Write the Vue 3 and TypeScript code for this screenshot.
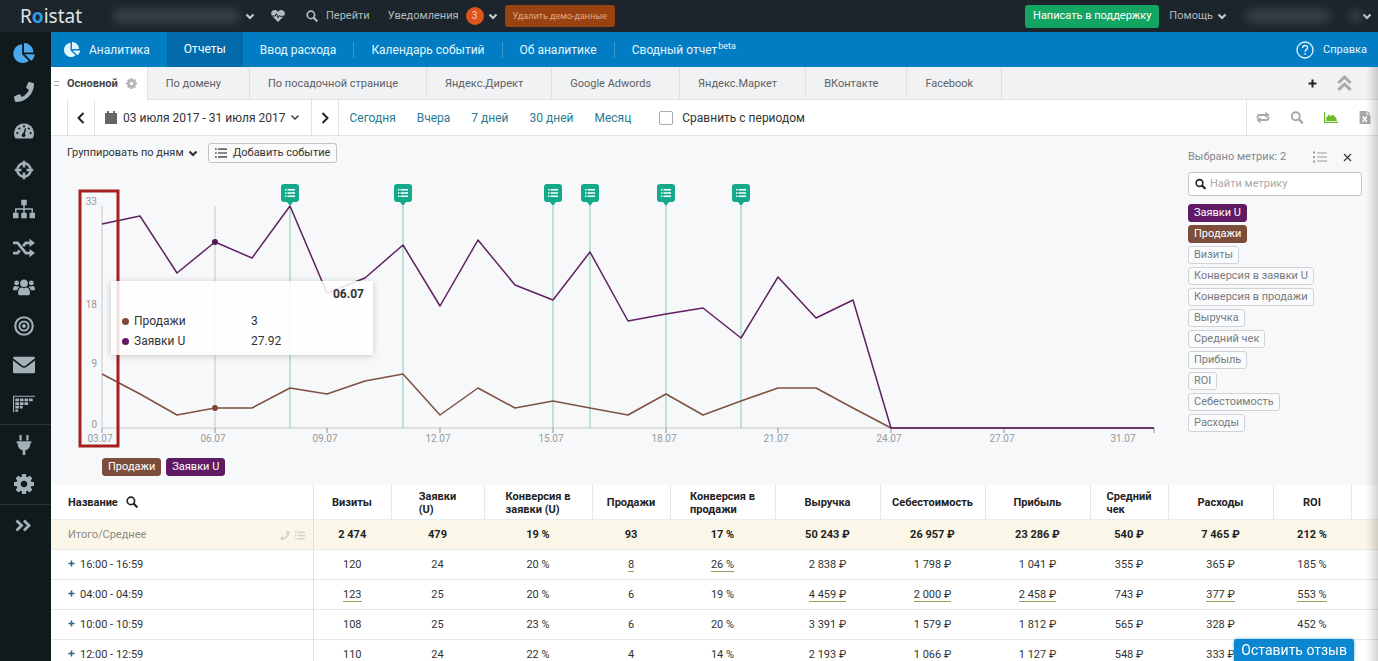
<script setup lang="ts">
import { computed, onBeforeUnmount, onMounted, ref } from 'vue'

const sideMain = ['pie', 'phone', 'gauge', 'cross', 'sitemap', 'shuffle', 'users', 'target', 'mail', 'cohort']
const sideTools = ['plug', 'gear']
const labels: Record<string, string> = {
  pie: 'Аналитика', phone: 'Звонки', gauge: 'Показатели', cross: 'Цели', sitemap: 'Каналы', shuffle: 'Сценарии',
  users: 'Клиенты', target: 'Ретаргетинг', mail: 'Рассылки', cohort: 'Когорты', plug: 'Интеграции', gear: 'Настройки',
}

const navItems = [
  { title: 'Ввод расхода' },
  { title: 'Календарь событий' },
  { title: 'Об аналитике' },
  { title: 'Сводный отчет', note: 'beta' },
]
const tabs = ['По домену', 'По посадочной странице', 'Яндекс.Директ', 'Google Adwords', 'Яндекс.Маркет', 'ВКонтакте', 'Facebook']
const ranges = ['Сегодня', 'Вчера', '7 дней', '30 дней', 'Месяц']
const metrics = ['Визиты', 'Конверсия в заявки U', 'Конверсия в продажи', 'Выручка', 'Средний чек', 'Прибыль', 'ROI', 'Себестоимость', 'Расходы']

const compare = ref(false)
const query = ref('')
const grouping = ref('day')

/* Chart */
const leads = [30.3, 31.5, 23, 27.6, 25.3, 33, 20, 22.3, 27.2, 18.1, 27.9, 21.3, 19.1, 26.1, 15.9, 17, 17.9, 13.4, 22.4, 16.3, 19, 0, 0, 0, 0, 0, 0, 0, 0]
const sales = [8, 5, 2, 3, 3, 6, 5, 7, 8, 2, 6, 3, 4, 3, 2, 5, 2, 4, 6, 6, 3, 0, 0, 0, 0, 0, 0, 0, 0]
const events = [5, 8, 12, 13, 15, 17]
const ticks = [0, 3, 6, 9, 12, 15, 18, 21, 24]
const yLabels = [
  { text: '33', y: 31 },
  { text: '18', y: 134 },
  { text: '9', y: 193 },
  { text: '0', y: 254 },
]
const baseY = 254
const topY = 32
const leftX = 51
const rightPad = 34
const plot = ref<HTMLElement | null>(null)
const width = ref(1136)
const step = computed(() => (width.value - leftX - rightPad) / 28)
const endX = computed(() => x(28))
function x(day: number): number {
  return Math.round(leftX + day * step.value)
}
function y(value: number): number {
  return Math.round(baseY - (value * (baseY - topY)) / 33)
}
function line(values: number[]): string {
  return values.map((v, i) => `${x(i)},${y(v)}`).join(' ')
}
function day(n: number): string {
  return String(n + 3).padStart(2, '0') + '.07'
}
let observer: ResizeObserver | undefined
onMounted(() => {
  const el = plot.value
  if (!el) return
  width.value = el.clientWidth
  observer = new ResizeObserver(() => (width.value = el.clientWidth))
  observer.observe(el)
})
onBeforeUnmount(() => observer?.disconnect())

/* Table */
const columns = [
  { title: ['Визиты'], w: 'w-s' },
  { title: ['Заявки', '(U)'], w: 'w-m' },
  { title: ['Конверсия в', 'заявки (U)'], w: 'w-xl' },
  { title: ['Продажи'], w: 'w-s' },
  { title: ['Конверсия в', 'продажи'], w: 'w-l' },
  { title: ['Выручка'], w: 'w-l' },
  { title: ['Себестоимость'], w: 'w-l' },
  { title: ['Прибыль'], w: 'w-l' },
  { title: ['Средний', 'чек'], w: 'w-s' },
  { title: ['Расходы'], w: 'w-l' },
  { title: ['ROI'], w: 'w-s' },
]
const total = ['2 474', '479', '19 %', '93', '17 %', '50 243 ₽', '26 957 ₽', '23 286 ₽', '540 ₽', '7 465 ₽', '212 %']
const rows = [
  { name: '16:00 - 16:59', best: [3, 4], cells: ['120', '24', '20 %', '8', '26 %', '2 838 ₽', '1 798 ₽', '1 041 ₽', '355 ₽', '365 ₽', '185 %'] },
  { name: '04:00 - 04:59', best: [0, 5, 6, 7, 9, 10], cells: ['123', '25', '20 %', '6', '19 %', '4 459 ₽', '2 000 ₽', '2 458 ₽', '743 ₽', '377 ₽', '553 %'] },
  { name: '10:00 - 10:59', best: [], cells: ['108', '25', '23 %', '6', '20 %', '3 391 ₽', '1 579 ₽', '1 812 ₽', '565 ₽', '328 ₽', '452 %'] },
  { name: '12:00 - 12:59', best: [], cells: ['110', '24', '22 %', '4', '14 %', '2 193 ₽', '1 066 ₽', '1 127 ₽', '548 ₽', '333 ₽', ''] },
] as { name: string; best: number[]; cells: string[] }[]
</script>

<template>
  <div class="app">
    <svg class="sprite" aria-hidden="true">
      <symbol id="pie" viewBox="0 0 544 512"><path fill="currentColor" d="M527.79 288H290.5l158.03 158.03c6.04 6.04 15.98 6.53 22.19.68 38.7-36.46 65.32-85.61 73.13-140.86 1.34-9.46-6.51-17.85-16.06-17.85zm-15.83-64.8C503.72 103.74 408.26 8.28 288.8.04 279.68-.59 272 7.1 272 16.24V240h223.77c9.14 0 16.82-7.68 16.19-16.8zM224 288V50.71c0-9.55-8.39-17.4-17.84-16.06C86.99 51.49-4.1 155.6.14 280.37 4.5 408.51 114.83 513.59 243.03 511.98c50.4-.63 96.97-16.87 135.26-44.03 7.9-5.6 8.42-17.23 1.57-24.08L224 288z" /></symbol>
      <symbol id="phone" viewBox="0 0 512 512"><path fill="currentColor" d="M493.4 24.6l-104-24c-11.3-2.6-22.9 3.3-27.5 13.9l-48 112c-4.2 9.8-1.4 21.3 6.9 28l60.6 49.6c-36 76.7-98.9 140.5-177.2 177.2l-49.6-60.6c-6.8-8.3-18.2-11.1-28-6.9l-112 48C3.9 366.5-2 378.1.6 389.4l24 104C27.1 504.2 36.7 512 48 512c256.1 0 464-207.5 464-464 0-11.2-7.7-20.9-18.6-23.4z" /></symbol>
      <symbol id="gauge" viewBox="0 0 24 24"><path fill="currentColor" d="M12 3a12 12 0 0 0-10.300 18h20.600A12 12 0 0 0 12 3z" /><g class="cut"><circle cx="12" cy="6.500" r="1.300" /><circle cx="6.500" cy="9" r="1.300" /><circle cx="4" cy="14.500" r="1.300" /><circle cx="20" cy="14.500" r="1.300" /><circle cx="17.800" cy="9" r="1.300" /><circle cx="11.500" cy="17" r="2.200" /><path d="M10.700 16l2.600-7.500 1.300.500-1.800 7.500z" /></g></symbol>
      <symbol id="cross" viewBox="0 0 24 24"><g fill="none" stroke="currentColor" stroke-width="3"><circle cx="12" cy="12" r="8" /><path d="M12 1v8M12 15v8M1 12h8M15 12h8" /></g></symbol>
      <symbol id="sitemap" viewBox="0 0 24 20"><path fill="currentColor" d="M9 0h6v6H9zM0 14h6v6H0zM9 14h6v6H9zM18 14h6v6h-6z" /><path fill="none" stroke="currentColor" stroke-width="1.600" d="M12 5v9M3 14v-4h18v4" /></symbol>
      <symbol id="shuffle" viewBox="0 0 24 20"><path fill="none" stroke="currentColor" stroke-width="3" d="M0 4.500h5l9 11h5M0 15.500h5l2.300-2.800M11 8l3-3.500h5" /><path fill="currentColor" d="M18 0l6 4.500L18 9zM18 11l6 4.500-6 4.500z" /></symbol>
      <symbol id="users" viewBox="0 0 24 18"><g fill="currentColor"><circle cx="12" cy="5" r="4.200" /><circle cx="4" cy="4.500" r="2.600" /><circle cx="20" cy="4.500" r="2.600" /><path d="M5.500 15.500c0-4 2-6 4-6 1.500 1 3.500 1 5 0 2 0 4 2 4 6 0 1.500-.8 2.500-2 2.500h-9c-1.200 0-2-1-2-2.500zM0 11.500C0 9 1 8 2.500 8c1 .6 2 .6 3.300.1L7 9.300C5.500 10 5 11 4.600 12.500H1c-.6 0-1-.4-1-1zM24 11.500C24 9 23 8 21.500 8c-1 .6-2 .6-3.300.1L17 9.300c1.500.700 2 1.700 2.400 3.200H23c.6 0 1-.4 1-1z" /></g></symbol>
      <symbol id="target" viewBox="0 0 24 24"><g fill="none" stroke="currentColor"><circle cx="12" cy="12" r="10.500" stroke-width="2.600" /><circle cx="12" cy="12" r="5.500" stroke-width="2.400" /></g><circle cx="12" cy="12" r="2.300" fill="currentColor" /></symbol>
      <symbol id="mail" viewBox="0 0 24 18"><path fill="currentColor" d="M1.500 0h21Q24 0 24 1.500L14 9.500q-2 1.500-4 0L0 1.500Q0 0 1.500 0zM0 4l9 7q3 2 6 0l9-7v12.500q0 1.500-1.500 1.500h-21Q0 18 0 16.500z" /></symbol>
      <symbol id="cohort" viewBox="0 0 24 18"><path fill="currentColor" d="M0 0h24v1.200H1.200V18H0zM2.500 3h4v3h-4zM7.500 3h4v3h-4zM12.500 3h4v3h-4zM17.500 3h4v3h-4zM2.500 7h4v3h-4zM7.500 7h4v3h-4zM12.500 7h4v3h-4zM2.500 11h4v3h-4zM7.500 11h3v3h-3zM2.500 15h3v2.500h-3z" /></symbol>
      <symbol id="plug" viewBox="0 0 18 22"><path fill="currentColor" d="M4 0h2.400v6H4zM11.600 0H14v6h-2.400zM1 7h16v2h-1c0 4.500-2 7-5.500 7.800V22h-3v-5.200C4 16 2 13.500 2 9H1z" /></symbol>
      <symbol id="gear" viewBox="0 128 1536 1536"><path fill="currentColor" d="M1024 896q0-106-75-181t-181-75-181 75-75 181 75 181 181 75 181-75 75-181zm512-109v222q0 12-8 23t-20 13l-185 28q-19 54-39 91 35 50 107 138 10 12 10 25t-9 23q-27 37-99 108t-94 71q-12 0-26-9l-138-108q-44 23-91 38-16 136-29 186-7 28-36 28h-222q-14 0-24.500-8.500t-11.500-21.500l-28-184q-49-16-90-37l-141 107q-10 9-25 9-14 0-25-11-126-114-165-168-7-10-7-23 0-12 8-23 15-21 51-66.500t54-70.500q-27-50-41-99l-183-27q-13-2-21-12.500t-8-23.500v-222q0-12 8-23t19-13l186-28q14-46 39-92-40-57-107-138-10-12-10-24 0-10 9-23 26-36 98.500-107.500t94.500-71.500q13 0 26 10l138 107q44-23 91-38 16-136 29-186 7-28 36-28h222q14 0 24.500 8.500t11.500 21.500l28 184q49 16 90 37l142-107q9-9 24-9 13 0 25 10 129 119 165 170 7 8 7 22 0 12-8 23-15 21-51 66.500t-54 70.500q26 50 41 98l183 28q13 2 21 12.500t8 23.500z" /></symbol>
      <symbol id="dbl" viewBox="0 0 18 14"><path fill="none" stroke="currentColor" stroke-width="3" d="M2 1.500L7.500 7 2 12.500M10 1.500L15.500 7 10 12.500" /></symbol>
      <symbol id="down" viewBox="0 0 10 7"><path fill="none" stroke="currentColor" stroke-width="2.200" d="M1.500 1.500L5 5l3.500-3.500" /></symbol>
      <symbol id="thin" viewBox="0 0 10 7"><path fill="none" stroke="currentColor" stroke-width="1.400" d="M1.500 1.500L5 5l3.500-3.500" /></symbol>
      <symbol id="prev" viewBox="0 0 8 12"><path fill="none" stroke="currentColor" stroke-width="2" d="M6.500 1L1.500 6l5 5" /></symbol>
      <symbol id="next" viewBox="0 0 8 12"><path fill="none" stroke="currentColor" stroke-width="2" d="M1.500 1l5 5-5 5" /></symbol>
      <symbol id="search" viewBox="0 0 14 14"><circle cx="5.700" cy="5.700" r="4.300" fill="none" stroke="currentColor" stroke-width="2" /><path stroke="currentColor" stroke-width="2.600" stroke-linecap="round" d="M9.300 9.300l3.200 3.200" /></symbol>
      <symbol id="heart" viewBox="0 0 14 12"><path fill="currentColor" d="M7 12L1.200 6.200C-.5 4 0 1.800 1.500.7 3.300-.5 5.700 0 7 2c1.300-2 3.700-2.500 5.500-1.300C14 1.800 14.500 4 12.800 6.200z" /><path class="beat" d="M1 6h3.200L5.500 3.500l1.700 4.300L8.500 5.500l.6.800H13" /></symbol>
      <symbol id="list" viewBox="0 0 14 11"><path fill="currentColor" d="M0 0h2v2H0zM3.500 0H14v2H3.500zM0 4.500h2v2H0zM3.500 4.500H14v2H3.500zM0 9h2v2H0zM3.500 9H14v2H3.500z" /></symbol>
      <symbol id="thinlist" viewBox="0 0 14 11"><path fill="currentColor" d="M0 0h2v2H0zM4 1h10v1H4zM0 4.500h2v2H0zM4 5h10v1H4zM0 9h2v2H0zM4 9h10v1H4z" /></symbol>
      <symbol id="calendar" viewBox="0 0 12 13"><path fill="currentColor" d="M0 2h2V0h2v2h4V0h2v2h2v11H0z" /></symbol>
      <symbol id="repeat" viewBox="0 0 14 12"><path fill="none" stroke="currentColor" stroke-width="1.800" d="M1.500 7V5.500Q1.500 3.500 3.500 3.500H10M12.500 5v1.500q0 2-2 2H4" /><path fill="currentColor" d="M9.500 0L13.500 3.500l-4 3.200zM4.500 5.300L.5 8.500l4 3.500z" /></symbol>
      <symbol id="chart" viewBox="0 0 14 11"><path fill="currentColor" d="M0 0h1.200v9.800H14V11H0zM2.200 9V6L5 2.500l2 1.800L9 2.500 11 5l1 .5L13 9z" /></symbol>
      <symbol id="file" viewBox="0 0 10 12"><path fill="currentColor" d="M0 0h6.500v3.500H10V12H0zM7.300 0L10 2.700H7.300z" /><path class="cutline" d="M2.800 5l4 5M6.800 5l-4 5" /></symbol>
      <symbol id="plus" viewBox="0 0 9 9"><path stroke="currentColor" stroke-width="2" d="M4.500 .5v8M.5 4.500h8" /></symbol>
      <symbol id="close" viewBox="0 0 9 9"><path stroke="currentColor" stroke-width="1.200" d="M1 1l7 7M8 1L1 8" /></symbol>
      <symbol id="up2" viewBox="0 0 14 15"><path fill="none" stroke="currentColor" stroke-width="2.800" d="M1.200 7.500L7 2l5.800 5.500M1.200 14L7 8.500l5.800 5.500" /></symbol>
      <symbol id="help" viewBox="0 0 18 18"><circle cx="9" cy="9" r="8" fill="none" stroke="currentColor" stroke-width="1.300" /><path fill="none" stroke="currentColor" stroke-width="1.400" d="M6.600 7c0-3.300 5-3.200 5-.3 0 1.900-2.500 1.900-2.500 4M9.100 12v1.700" /></symbol>
    </svg>

    <header class="top">
      <a class="logo" href="#">R<span>o</span>istat</a>
      <button class="account" aria-label="Выбор проекта"><i class="mask mask-l"></i><svg class="i10"><use href="#down" /></svg></button>
      <button class="heart" aria-label="Состояние"><svg class="i14"><use href="#heart" /></svg></button>
      <button class="go"><svg class="i14"><use href="#search" /></svg>Перейти</button>
      <button class="notice">Уведомления <b>3</b><svg class="i10"><use href="#down" /></svg></button>
      <button class="demo">Удалить демо-данные</button>
      <span class="grow"></span>
      <button class="support">Написать в поддержку</button>
      <button class="help">Помощь<svg class="i10"><use href="#down" /></svg></button>
      <button class="user" aria-label="Профиль"><i class="mask mask-m"></i><i class="mask mask-s"></i><svg class="i10"><use href="#down" /></svg></button>
    </header>

    <div class="body">
      <aside class="side">
        <nav class="group">
          <a v-for="(s, i) in sideMain" :key="s" href="#" :class="{ on: i === 0 }" :aria-label="labels[s]"><svg><use :href="'#' + s" /></svg></a>
        </nav>
        <nav class="group">
          <a v-for="s in sideTools" :key="s" href="#" :aria-label="labels[s]"><svg><use :href="'#' + s" /></svg></a>
        </nav>
        <nav class="group">
          <a href="#" class="small" aria-label="Развернуть меню"><svg><use href="#dbl" /></svg></a>
        </nav>
      </aside>

      <main class="main">
        <nav class="nav">
          <a href="#" class="section"><svg><use href="#pie" /></svg>Аналитика</a>
          <a href="#" class="current">Отчеты</a>
          <a v-for="n in navItems" :key="n.title" href="#" class="item">{{ n.title }}<sup v-if="n.note">{{ n.note }}</sup></a>
          <span class="grow"></span>
          <a href="#" class="ref"><svg><use href="#help" /></svg>Справка</a>
        </nav>

        <div class="tabs">
          <a href="#" class="tab chosen"><i class="grip"></i>Основной<svg><use href="#gear" /></svg></a>
          <a v-for="t in tabs" :key="t" href="#" class="tab">{{ t }}</a>
          <span class="grow"></span>
          <button class="add" aria-label="Добавить отчет"><svg><use href="#plus" /></svg></button>
          <button class="fold" aria-label="Свернуть"><svg><use href="#up2" /></svg></button>
        </div>

        <div class="tools">
          <button class="arrow" aria-label="Предыдущий период"><svg><use href="#prev" /></svg></button>
          <button class="period"><svg class="cal"><use href="#calendar" /></svg>03 июля 2017 - 31 июля 2017<svg class="i10"><use href="#thin" /></svg></button>
          <button class="arrow" aria-label="Следующий период"><svg><use href="#next" /></svg></button>
          <div class="ranges"><a v-for="r in ranges" :key="r" href="#">{{ r }}</a></div>
          <label class="compare"><input v-model="compare" type="checkbox" />Сравнить с периодом</label>
          <span class="grow"></span>
          <div class="actions">
            <button aria-label="Обновить"><svg><use href="#repeat" /></svg></button>
            <button aria-label="Поиск"><svg><use href="#search" /></svg></button>
            <button class="green" aria-label="График"><svg><use href="#chart" /></svg></button>
            <button aria-label="Экспорт в Excel"><svg><use href="#file" /></svg></button>
          </div>
        </div>

        <section class="report">
          <div class="graph">
            <div class="graph-bar">
              <span class="grouping">
                <select v-model="grouping" aria-label="Группировка">
                  <option value="day">Группировать по дням</option>
                </select>
                <svg class="i10"><use href="#down" /></svg>
              </span>
              <button class="event"><svg><use href="#list" /></svg>Добавить событие</button>
            </div>

            <div ref="plot" class="plot">
              <svg class="canvas" :width="width" height="284" role="img" aria-label="Продажи и заявки по дням">
                <g class="grid">
                  <line :x1="leftX" :x2="endX" :y1="baseY" :y2="baseY" />
                  <line v-for="t in [0, 3]" :key="t" :x1="x(t)" :x2="x(t)" :y1="topY" :y2="baseY" />
                </g>
                <g class="ticks">
                  <line v-for="t in [...ticks, 28]" :key="t" :x1="x(t)" :x2="x(t)" :y1="baseY" :y2="baseY + 5" />
                </g>
                <line v-for="e in events" :key="e" class="mark" :x1="x(e)" :x2="x(e)" :y1="topY" :y2="baseY" />
                <polyline class="sales" :points="line(sales)" />
                <polyline class="leads" :points="line(leads)" />
                <circle class="dot-l" :cx="x(3)" :cy="y(leads[3])" r="3" />
                <circle class="dot-s" :cx="x(3)" :cy="y(sales[3])" r="3" />
                <g v-for="e in events" :key="'m' + e" class="flag">
                  <path :d="`M${x(e) - 6} 10h12q3 0 3 3v12q0 3-3 3h-3l-3 4-3-4h-3q-3 0-3-3v-12q0-3 3-3z`" />
                  <use href="#list" :x="x(e) - 5" y="15" width="10" height="8" />
                </g>
                <text v-for="l in yLabels" :key="l.text" class="axis end" x="46" :y="l.y">{{ l.text }}</text>
                <text v-for="t in ticks" :key="'t' + t" class="axis mid" :x="x(t) - 2" :y="baseY + 14">{{ day(t) }}</text>
                <text class="axis mid" :x="endX - 31" :y="baseY + 14">31.07</text>
                <rect class="frame" x="29" y="17" width="38" height="255" />
              </svg>
              <div class="tip">
                <strong>06.07</strong>
                <dl>
                  <dt class="s">Продажи</dt><dd>3</dd>
                  <dt class="l">Заявки U</dt><dd>27.92</dd>
                </dl>
              </div>
            </div>
            <div class="legend">
              <button class="tag brown">Продажи</button>
              <button class="tag purple">Заявки U</button>
            </div>
          </div>

          <aside class="metrics">
            <div class="metrics-head">
              <span>Выбрано метрик: 2</span>
              <button aria-label="Список"><svg class="i14"><use href="#thinlist" /></svg></button>
              <button class="dark" aria-label="Закрыть"><svg class="x"><use href="#close" /></svg></button>
            </div>
            <label class="find"><svg><use href="#search" /></svg><input v-model="query" type="text" placeholder="Найти метрику" aria-label="Найти метрику" /></label>
            <button class="tag purple">Заявки U</button>
            <button class="tag brown">Продажи</button>
            <button v-for="m in metrics" :key="m" class="tag">{{ m }}</button>
          </aside>
        </section>

        <table class="data">
          <colgroup>
            <col />
            <col v-for="(c, i) in columns" :key="i" :class="c.w" />
            <col class="w-rest" />
          </colgroup>
          <thead>
            <tr>
              <th class="name" scope="col">Название<svg><use href="#search" /></svg></th>
              <th v-for="(c, i) in columns" :key="i" scope="col"><span><template v-for="(p, j) in c.title" :key="p"><br v-if="j" />{{ p }}</template></span></th>
              <th></th>
            </tr>
          </thead>
          <tbody>
            <tr class="total">
              <td class="name"><div><span>Итого/Среднее</span><svg class="call"><use href="#phone" /></svg><svg class="lst"><use href="#list" /></svg></div></td>
              <td v-for="(v, i) in total" :key="i">{{ v }}</td>
              <td></td>
            </tr>
            <tr v-for="r in rows" :key="r.name">
              <td class="name"><button aria-label="Развернуть"><svg><use href="#plus" /></svg></button>{{ r.name }}</td>
              <td v-for="(v, i) in r.cells" :key="i"><span :class="{ best: r.best.includes(i) }">{{ v }}</span></td>
              <td></td>
            </tr>
          </tbody>
        </table>
        <i class="edge"></i>
      </main>
    </div>
    <button class="feedback">Оставить отзыв</button>
  </div>
</template>

<style>
body { margin: 0; }
</style>

<style scoped>
.app { height: 100vh; display: flex; flex-direction: column; overflow: hidden; font: 12px/16px Roboto, "Noto Sans", sans-serif; color: #333; background: #fff; }
.app * { box-sizing: border-box; }
.sprite { position: absolute; width: 0; height: 0; }
button { font: inherit; color: inherit; background: none; border: 0; padding: 0; margin: 0; display: inline-flex; align-items: center; cursor: pointer; white-space: nowrap; }
a { color: inherit; text-decoration: none; white-space: nowrap; }
svg { display: block; flex: none; }
.grow { flex: 1; }
.i10 { width: 10px; height: 7px; }
.i14 { width: 14px; height: 12px; }
.cut { fill: #10191c; }
.beat { fill: none; stroke: #1b252b; stroke-width: 1; }
.cutline { stroke: #fff; stroke-width: 1.4; }

.top { height: 32px; flex: none; display: flex; align-items: center; background: #1b252b; color: #b4babd; padding-right: 6px; font-size: 11px; }
.logo { width: 92px; padding-left: 20px; font: 19px/32px "Noto Sans", sans-serif; color: #dfe4e6; }
.logo span { color: #2b9fe6; font-weight: 700; }
.mask { display: block; height: 14px; border-radius: 6px; background: #46525a; filter: blur(4px); opacity: .6; }
.mask-l { width: 126px; }
.mask-m { width: 84px; margin-right: 20px; }
.mask-s { width: 12px; }
.account { gap: 6px; margin-left: 21px; }
.heart { margin-left: 16px; }
.go { margin-left: 20px; gap: 7px; }
.notice { margin-left: 18px; }
.notice b { width: 18px; height: 18px; margin: 0 4px 0 7px; border-radius: 50%; background: #dd5420; color: #ffd0b5; font: 10px/18px Roboto, sans-serif; }
.demo { height: 22px; margin-left: 7px; padding: 0 8px; border-radius: 3px; background: #9b4212; color: #dfa985; font-size: 9px; }
.support { height: 23px; padding: 0 8px; border-radius: 3px; background: #13a562; color: #fff; }
.help { margin-left: 10px; gap: 4px; }
.user { margin-left: 19px; gap: 0; }
.account svg, .user svg, .notice svg, .help svg { color: #c5cbce; }

.body { flex: 1; display: flex; min-height: 0; }
.side { width: 51px; flex: none; padding-top: 1px; background: #10191c; color: #a3b1b9; }
.group { padding-bottom: 1px; border-bottom: 1px solid #2a3337; }
.group:last-child { border: 0; }
.group a { display: flex; height: 39px; align-items: center; padding-left: 13px; }
.group a svg { width: 22px; height: 20px; }
.group a.on { color: #4aa8ee; }
.group .small { height: 41px; }
.group .small svg { height: 13px; width: 20px; }

.main { flex: 1; min-width: 0; position: relative; }
.edge { position: absolute; top: 35px; right: 0; bottom: 0; width: 12px; background: linear-gradient(90deg, rgba(0, 0, 0, 0), rgba(0, 0, 0, .16)); pointer-events: none; }
.nav { height: 35px; display: flex; align-items: center; background: #027dc3; color: #e3f6ff; }
.nav .section { display: flex; align-items: center; gap: 9px; padding: 0 17px 0 13px; }
.nav .section svg { width: 16px; height: 15px; }
.nav .current { line-height: 35px; padding: 0 17px; background: #026aa9; color: #fff; }
.nav .item { padding: 0 17px; }
.nav .item + .item { border-left: 1px solid #3a9ad3; }
.nav sup { margin-left: 1px; font-size: 9px; line-height: 9px; }
.nav .ref { display: flex; align-items: center; gap: 9px; padding-right: 11px; font-size: 11px; }
.nav .ref svg { width: 18px; height: 18px; }

.tabs { height: 33px; display: flex; background: #f1f2f4; border-bottom: 1px solid #dfe0e2; color: #5c6164; font-size: 11px; }
.tab { line-height: 34px; height: 32px; padding: 0 28px 0 18px; border-right: 1px solid #dfe0e2; }
.tab.chosen { display: flex; align-items: center; height: 33px; padding: 0 10px 0 2px; background: #fff; color: #444; font-weight: 700; }
.tab.chosen svg { width: 11px; height: 11px; margin-left: 8px; color: #b0b3b5; }
.grip { width: 5px; height: 5px; margin: 0 8px 0 1px; border: solid #aaa; border-width: 1px 0; }
.add { width: 34px; justify-content: center; color: #222; }
.add svg { width: 9px; height: 9px; }
.fold { width: 49px; padding-left: 8px; color: #a9abad; }
.fold svg { width: 15px; height: 16px; }

.tools { height: 36px; display: flex; align-items: stretch; background: #fff; border-bottom: 1px solid #e1e2e4; padding-left: 16px; }
.arrow { width: 28px; justify-content: center; border-left: 1px solid #e1e2e4; border-right: 1px solid #e1e2e4; color: #222; }
.arrow svg { width: 8px; height: 12px; }
.period { padding: 0 11px 0 10px; gap: 5px; }
.period .cal { width: 12px; height: 13px; margin-right: 1px; color: #666; }
.ranges { display: flex; align-items: center; gap: 21px; margin-left: 10px; color: #2c7a91; }
.compare { display: flex; align-items: center; gap: 9px; margin-left: 28px; }
.compare input { appearance: none; width: 14px; height: 14px; margin: 0; border: 1px solid #aaa; border-radius: 2px; background: #fff; }
.compare input:checked { background: #2c7a91; }
.actions { display: flex; align-items: center; gap: 20px; padding: 0 6px 0 9px; border-left: 1px solid #e1e2e4; color: #a6a8aa; }
.actions svg { width: 14px; height: 13px; }
.actions .green { color: #6db82c; }

.report { display: flex; align-items: flex-start; background: #f7f8fa; }
.graph { flex: 1; min-width: 0; }
.graph-bar { display: flex; align-items: center; gap: 10px; padding: 7px 0 0 16px; font-size: 11px; }
.grouping { display: flex; align-items: center; gap: 4px; }
.grouping select { appearance: none; border: 0; background: none; padding: 0; font: inherit; color: inherit; }
.event { height: 20px; padding: 0 6px; gap: 6px; border: 1px solid #c2c3c5; border-radius: 3px; background: #fafafa; }
.event svg { width: 12px; height: 10px; color: #666; }
.plot { position: relative; height: 284px; margin-top: 11px; }
.canvas { overflow: visible; }
.grid line { stroke: #c6c8ca; }
.ticks line { stroke: #8d8f91; }
.mark { stroke: #7fcdb8; }
.sales, .leads { fill: none; stroke-width: 1.5; stroke-linejoin: round; }
.sales { stroke: #7d5142; }
.leads { stroke: #5f2060; }
.dot-l { fill: #4f1852; }
.dot-s { fill: #7d4637; }
.flag { color: #fff; }
.flag path { fill: #14a98a; }
.axis { font-size: 10px; fill: #96999c; }
.end { text-anchor: end; }
.mid { text-anchor: middle; }
.frame { fill: none; stroke: #a3201f; stroke-width: 3; }
.tip { position: absolute; left: 60px; top: 107px; width: 262px; height: 74px; padding: 6px 9px 6px 11px; background: rgba(255, 255, 255, .86); box-shadow: 0 1px 7px rgba(0, 0, 0, .2); }
.tip strong { display: block; text-align: right; line-height: 15px; }
.tip dl { display: grid; grid-template-columns: 129px 1fr; margin: 9px 0 0; line-height: 20px; }
.tip dt::before { content: ""; display: inline-block; width: 7px; height: 7px; margin-right: 5px; border-radius: 50%; background: #7d4a38; }
.tip dt.l::before { background: #641668; }
.tip dd { margin: 0; }
.legend { display: flex; gap: 5px; padding: 0 0 9px 51px; }
.tag { height: 18px; padding: 0 5px; border: 1px solid #d0d2d5; border-radius: 3px; background: #fafbfc; color: #777b7e; font-size: 11px; }
.tag.brown { background: #7d4d3b; border-color: #7d4d3b; color: #fff; }
.tag.purple { background: #5f1a63; border-color: #5f1a63; color: #fff; }

.metrics { width: 190px; flex: none; display: flex; flex-direction: column; align-items: flex-start; gap: 3px; padding: 12px 16px 0 0; }
.metrics-head { display: flex; align-items: center; align-self: stretch; height: 18px; color: #86898c; font-size: 11px; }
.metrics-head span { flex: 1; }
.metrics-head button { color: #999; margin-right: 16px; }
.metrics-head .dark { color: #333; margin-right: 10px; }
.x { width: 9px; height: 9px; }
.find { display: flex; align-items: center; align-self: stretch; gap: 4px; height: 24px; margin: 3px 0 5px; padding: 0 6px; border: 1px solid #c2c4c6; border-radius: 3px; background: #fff; }
.find svg { width: 11px; height: 12px; color: #222; }
.find input { flex: 1; min-width: 0; border: 0; padding: 0; outline: 0; font: inherit; font-size: 11px; background: none; }
.find input::placeholder { color: #aaa; }

.data { width: 100%; table-layout: fixed; border-collapse: collapse; border-spacing: 0; font-size: 11px; text-align: center; }
.w-s { width: 78px; }
.w-m { width: 93px; }
.w-l { width: 105px; }
.w-xl { width: 108px; }
.w-rest { width: 27px; }
.data th { height: 34px; padding: 2px 0 0; border-left: 1px solid #e6e7e9; border-bottom: 1px solid #ebecee; color: #222; line-height: 13px; }
.data th:first-child { border-left: 0; }
.data th span { display: inline-block; text-align: left; }
.data td { height: 30px; padding: 2px 0 0; border-bottom: 1px solid #e6e7e9; line-height: 14px; }
.data .name { text-align: left; padding-left: 17px; border-right: 1px solid #dddfe1; }
.data th.name svg { display: inline-block; width: 12px; height: 12px; margin-left: 8px; vertical-align: -2px; }
.total td { background: #faf7e8; font-weight: 700; color: #222; }
.total .name { font-weight: 400; color: #8a8c86; }
.total div { display: flex; align-items: center; gap: 5px; padding-right: 8px; }
.total div span { flex: 1; }
.total div svg { color: #d3d3cb; width: 10px; height: 9px; }
.name button { margin-right: 5px; vertical-align: 1px; color: #2c6a80; }
.name button svg { width: 7px; height: 7px; }
.best { border-bottom: 1px solid #91a05c; }
.feedback { position: fixed; right: 24px; bottom: 0; height: 22px; padding: 0 7px; border-radius: 3px 3px 0 0; background: #0b86d0; color: #fff; font-size: 14px; box-shadow: 0 0 3px #58a9dc; }
</style>
